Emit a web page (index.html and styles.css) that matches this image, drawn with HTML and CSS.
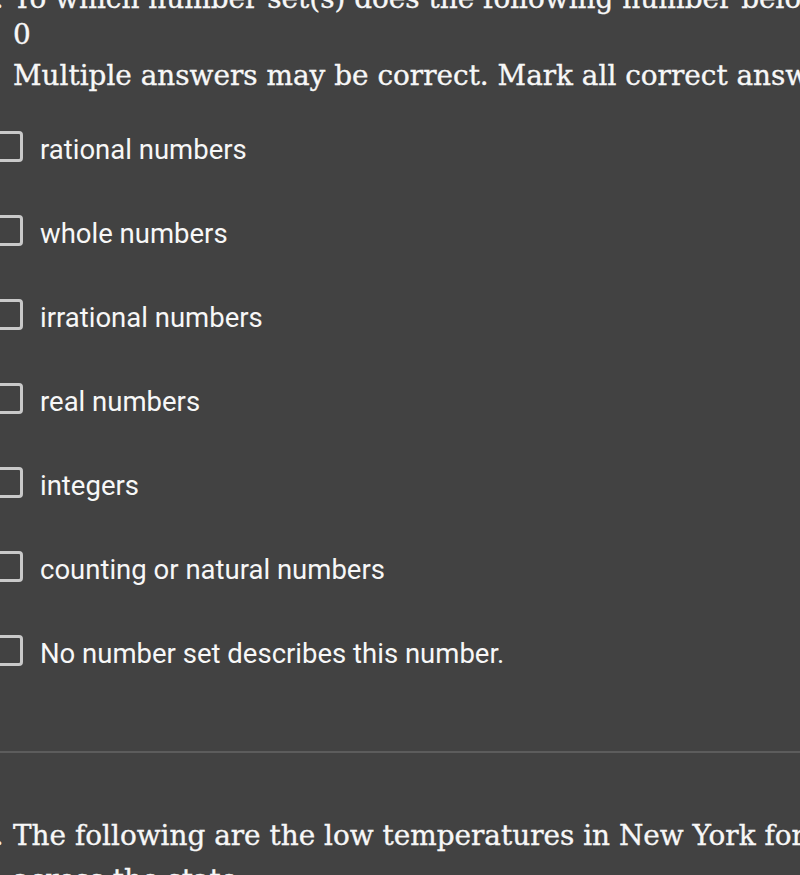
FILE: index.html
```html
<!DOCTYPE html>
<html>
<head>
<meta charset="utf-8">
<link rel="stylesheet" href="styles.css">
</head>
<body>
<div class="page">
  <section class="question">
    <div class="qnum">1.</div>
    <div class="qbody">
      <p class="qtext">To which number set(s) does the following number belong?</p>
      <p class="qmath">0</p>
      <p class="qnote">Multiple answers may be correct. Mark all correct answers.</p>
      <ul class="options">
        <li class="option"><span class="box"></span><span class="label">rational numbers</span></li>
        <li class="option"><span class="box"></span><span class="label">whole numbers</span></li>
        <li class="option"><span class="box"></span><span class="label">irrational numbers</span></li>
        <li class="option"><span class="box"></span><span class="label">real numbers</span></li>
        <li class="option"><span class="box"></span><span class="label">integers</span></li>
        <li class="option"><span class="box"></span><span class="label">counting or natural numbers</span></li>
        <li class="option"><span class="box"></span><span class="label">No number set describes this number.</span></li>
      </ul>
    </div>
  </section>
  <hr class="divider">
  <section class="question q-tall">
    <div class="qnum">2.</div>
    <div class="qbody">
      <p class="qtext">The following are the low temperatures in New York for one day<br>across the state:</p>
    </div>
  </section>
</div>
</body>
</html>
```

FILE: styles.css
```css
html, body {
  margin: 0;
  padding: 0;
  background: #424242;
  overflow: hidden;
}
body {
  width: 800px;
  height: 875px;
  color: #f7f7f7;
}
.page {
  margin-left: -23px;
  margin-top: -19px;
  width: 1200px;
}
.question {
  display: flex;
  font-family: "DejaVu Serif", serif;
  font-size: 27.9px;
  -webkit-text-stroke: 0.35px #f7f7f7;
}
.qnum {
  width: 36px;
  line-height: 36px;
}
.qbody {
  flex: 1;
}
.qtext {
  margin: 0;
  line-height: 36px;
}
.q-tall .qnum,
.q-tall .qtext {
  line-height: 44px;
}
.qmath {
  margin: 0;
  line-height: 36px;
}
.qnote {
  margin: 3px 0 0 0;
  line-height: 40px;
}
.options {
  list-style: none;
  margin: 12px 0 0 -21px;
  padding: 0;
  font-family: Roboto, sans-serif;
  font-size: 27.5px;
  -webkit-text-stroke: 0;
}
.option {
  display: flex;
  align-items: center;
  height: 84px;
}
.box {
  width: 25px;
  height: 25px;
  border: 3px solid #c9c9c9;
  border-radius: 4px;
  margin-right: 17px;
  margin-top: -7px;
  flex: none;
}
.label {
  line-height: 32px;
}
.divider {
  border: none;
  height: 2px;
  background: #5c5c5c;
  margin: 55px 0 61px 0;
}
```
